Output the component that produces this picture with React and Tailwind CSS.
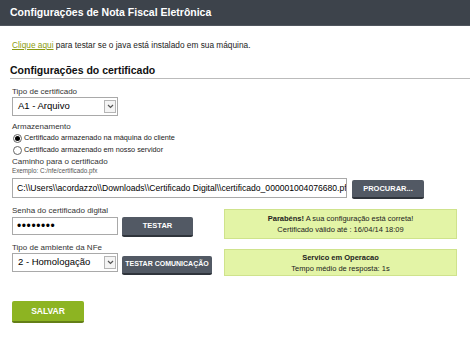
import React from 'react';

const font = { fontFamily: '"Liberation Sans", Arial, sans-serif' };

function FakeSelect({ value, className }) {
  return (
    <div className={`flex items-center justify-between h-[19px] w-[106px] border border-[#a9a9a9] bg-white pl-[5px] pr-[1px] ${className || ''}`}>
      <span className="text-[9.5px] text-black">{value}</span>
      <span className="flex items-center justify-center w-[12px] h-[13px] border border-[#b5b5b5] bg-[#f4f4f4]">
        <svg width="7" height="5" viewBox="0 0 7 5">
          <path d="M1 1 L3.5 3.5 L6 1" fill="none" stroke="#555" strokeWidth="1.2" />
        </svg>
      </span>
    </div>
  );
}

function DarkButton({ children, className }) {
  return (
    <button className={`h-[19px] rounded-[2px] bg-[#525964] border-b-2 border-[#2f343b] text-white font-bold whitespace-nowrap ${className}`}>
      {children}
    </button>
  );
}

function Radio({ checked, label }) {
  return (
    <div className="flex items-center gap-[2px] h-[12px]">
      <span className="w-[9px] h-[9px] rounded-full border border-[#666] bg-white flex items-center justify-center">
        {checked && <span className="w-[5px] h-[5px] rounded-full bg-black" />}
      </span>
      <span className="text-[7.3px] text-[#222]">{label}</span>
    </div>
  );
}

export default function App() {
  return (
    <div className="w-[470px] h-[340px] bg-white overflow-hidden" style={font}>
      {/* Header */}
      <div className="h-[26px] bg-[#3d434b] border-b border-[#50565e] flex items-center pl-[10px]">
        <h1 className="text-white font-bold text-[10.5px]">Configurações de Nota Fiscal Eletrônica</h1>
      </div>

      <div className="pl-[12px]">
        <p className="mt-[14px] text-[8.3px] leading-[10px] text-[#222]">
          <a className="text-[#8a9b0f] underline">Clique aqui</a> para testar se o java está instalado em sua máquina.
        </p>

        <h2 className="mt-[14px] -ml-[2px] text-[10.5px] leading-[12px] font-bold text-[#111] pb-[2px] border-b border-[#bbb]">
          Configurações do certificado
        </h2>

        {/* Tipo de certificado */}
        <div className="mt-[8px] text-[8px] leading-[10px] text-[#333]">Tipo de certificado</div>
        <FakeSelect value="A1 - Arquivo" />

        {/* Armazenamento */}
        <div className="mt-[6px] text-[8px] leading-[10px] text-[#333]">Armazenamento</div>
        <div className="pl-[1px] flex flex-col">
          <Radio checked label="Certificado armazenado na máquina do cliente" />
          <Radio label="Certificado armazenado em nosso servidor" />
        </div>

        {/* Caminho */}
        <div className="mt-[1px] text-[8px] leading-[10px] text-[#333]">Caminho para o certificado</div>
        <div className="text-[6.3px] text-[#555] leading-[8px]">Exemplo: C:/nfe/certificado.pfx</div>
        <div className="flex items-start mt-[3px]">
          <div className="w-[335px] h-[20px] border border-[#a9a9a9] flex items-center pl-[4px] overflow-hidden whitespace-nowrap">
            <span className="text-[8.6px] text-black">C:\\Users\\acordazzo\\Downloads\\Certificado Digital\\certificado_000001004076680.pfx</span>
          </div>
          <DarkButton className="ml-[5px] mt-[2px] w-[72px] text-[7.5px]">PROCURAR...</DarkButton>
        </div>

        {/* Senha */}
        <div className="flex items-start mt-[7px]">
          <div className="flex flex-col w-[106px]">
            <div className="text-[8px] text-[#333] h-[10px] leading-[10px]">Senha do certificado digital</div>
            <div className="mt-[1px] h-[18px] border border-[#a9a9a9] flex items-center pl-[4px]">
              <span className="text-[12px] leading-[12px] tracking-[0.6px] text-black">••••••••</span>
            </div>
          </div>
          <DarkButton className="ml-[4px] mt-[11px] h-[20px] w-[71px] text-[7.5px]">TESTAR</DarkButton>
          <div className="ml-[31px] mt-[3px] w-[233px] h-[30px] bg-[#e3f4a6] border border-[#cfe38c] flex flex-col items-center justify-center text-[7.5px] text-[#222] leading-[11px]">
            <span><b>Parabéns!</b> A sua configuração está correta!</span>
            <span>Certificado válido até : 16/04/14 18:09</span>
          </div>
        </div>

        {/* Ambiente */}
        <div className="flex items-start mt-[4px]">
          <div className="flex flex-col w-[106px]">
            <div className="text-[8px] text-[#333] h-[10px] leading-[10px]">Tipo de ambiente da NFe</div>
            <FakeSelect value="2 - Homologação" />
          </div>
          <DarkButton className="ml-[4px] mt-[13px] w-[90px] text-[7px]">TESTAR COMUNICAÇÃO</DarkButton>
          <div className="ml-[12px] mt-[6px] w-[233px] h-[27px] bg-[#e3f4a6] border border-[#cfe38c] flex flex-col items-center justify-center text-[7.5px] text-[#222] leading-[11px]">
            <span className="font-bold">Servico em Operacao</span>
            <span>Tempo médio de resposta: 1s</span>
          </div>
        </div>

        <button className="mt-[25px] w-[72px] h-[22px] rounded-[2px] bg-[#8db422] border-b-2 border-[#647f17] text-white font-bold text-[8.5px]">
          SALVAR
        </button>
      </div>
    </div>
  );
}
